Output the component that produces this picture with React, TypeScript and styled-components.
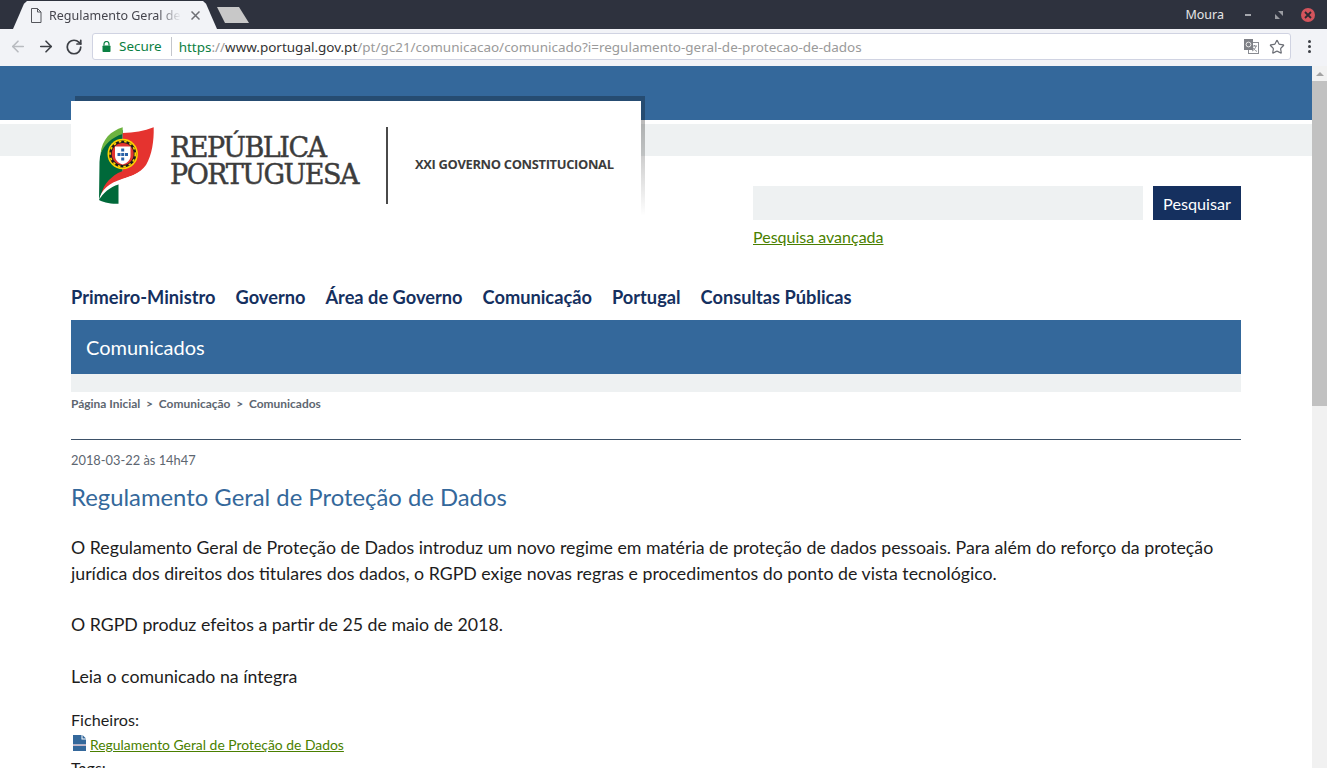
import React from 'react';
import styled, { createGlobalStyle } from 'styled-components';
import { ArrowLeft, ArrowRight, RotateCw, Star } from 'lucide-react';

const GlobalStyle = createGlobalStyle`
    html, body {
        margin: 0;
        padding: 0;
        height: 768px;
        overflow: hidden;
        background: #fff;
    }
    * {
        box-sizing: border-box;
    }
`;

const BLUE = '#34689b';
const PALE = '#eef1f2';
const NAVY = '#15305f';
const GREEN = '#4a7f00';

const Window = styled.div`
    width: 1327px;
    height: 768px;
    display: flex;
    flex-direction: column;
    overflow: hidden;
`;

const TitleBar = styled.div`
    height: 29px;
    flex: none;
    background: #2e323e;
    display: flex;
    align-items: flex-end;
    padding-left: 13px;
    font-family: 'Noto Sans', sans-serif;
`;

const Tab = styled.div`
    width: 204px;
    height: 28px;
    background: #f2f3f7;
    clip-path: polygon(0 100%, 11px 10%, 14px 0, 190px 0, 193px 10%, 100% 100%);
    display: flex;
    align-items: center;
    padding-left: 17px;
    flex: none;
`;

const TabTitle = styled.span`
    font-size: 12.5px;
    color: #45454d;
    margin-left: 7px;
    width: 132px;
    white-space: nowrap;
    overflow: hidden;
    -webkit-mask-image: linear-gradient(to right, #000 82%, transparent 100%);
    mask-image: linear-gradient(to right, #000 82%, transparent 100%);
`;

const TabClose = styled.svg`
    margin-left: 10px;
    flex: none;
`;

const NewTab = styled.div`
    width: 32px;
    height: 16px;
    margin: 0 0 6px 0;
    background: #c8c8c8;
    clip-path: polygon(0 0, 22px 0, 100% 100%, 8px 100%);
    flex: none;
`;

const WindowControls = styled.div`
    margin-left: auto;
    height: 29px;
    display: flex;
    align-items: center;
    color: #e6e6e6;
`;

const UserName = styled.span`
    font-size: 12.5px;
    margin-right: 21px;
`;

const MinimizeMark = styled.span`
    width: 6px;
    height: 2px;
    background: #a5a7ad;
    margin-right: 24px;
`;

const CloseButton = styled.span`
    width: 14px;
    height: 14px;
    border-radius: 50%;
    background: #d4545c;
    margin: 0 12px 0 18px;
    display: flex;
    align-items: center;
    justify-content: center;
`;

const Toolbar = styled.div`
    height: 37px;
    flex: none;
    background: #f2f3f7;
    display: flex;
    align-items: center;
    padding: 0 0 2px 9px;
    font-family: 'Noto Sans', sans-serif;
`;

const NavIcon = styled.span<{ $muted?: boolean }>`
    width: 18px;
    height: 18px;
    margin-right: 10px;
    display: flex;
    align-items: center;
    justify-content: center;
    flex: none;
    color: ${(p) => (p.$muted ? '#b9bbc0' : '#3c3f45')};
`;

const AddressBar = styled.div`
    width: 1199px;
    height: 27px;
    margin-left: -1px;
    background: #fff;
    border: 1px solid #d0d3e2;
    border-radius: 3px;
    display: flex;
    align-items: center;
    padding-left: 9px;
    font-size: 13.48px;
    white-space: nowrap;
    flex: none;
`;

const SecureLabel = styled.span`
    color: #0b8043;
    margin-left: 8px;
    padding-right: 9px;
    border-right: 1px solid #c4c6cc;
    line-height: 19px;
    margin-right: 7px;
`;

const UrlScheme = styled.span`
    color: #0b8043;
`;

const UrlHost = styled.span`
    color: #333;
`;

const UrlPath = styled.span`
    color: #9a9a9a;
`;

const AddressActions = styled.div`
    margin-left: auto;
    display: flex;
    align-items: center;
    gap: 10px;
    padding-right: 5px;
    color: #6b6e75;
`;

const MenuDots = styled.div`
    margin-left: 17px;
    display: flex;
    flex-direction: column;
    gap: 2px;
`;

const Dot = styled.span`
    width: 3px;
    height: 3px;
    border-radius: 50%;
    background: #3c3f45;
`;

const Viewport = styled.div`
    flex: 1;
    min-height: 0;
    display: flex;
`;

const Page = styled.div`
    flex: 1;
    min-width: 0;
    position: relative;
    overflow: hidden;
    font-family: Lato, sans-serif;
    color: #222;
`;

const Scrollbar = styled.div`
    width: 15px;
    flex: none;
    background: #f1f1f1;
    display: flex;
    flex-direction: column;
    align-items: center;
    padding-top: 6px;
`;

const ScrollArrow = styled.div`
    width: 0;
    height: 0;
    border-left: 4px solid transparent;
    border-right: 4px solid transparent;
    border-bottom: 4px solid #a3a3a3;
    margin-bottom: 5px;
`;

const ScrollThumb = styled.div`
    width: 15px;
    height: 325px;
    background: #c1c1c1;
`;

const TopBand = styled.div`
    height: 54px;
    background: ${BLUE};
`;

const PaleBand = styled.div`
    height: 32px;
    margin-top: 4px;
    background: ${PALE};
`;

const LogoShadow = styled.div`
    position: absolute;
    left: 75px;
    top: 30px;
    width: 570px;
    height: 120px;
    background: linear-gradient(
        to bottom,
        rgba(0, 0, 0, 0.27) 0,
        rgba(0, 0, 0, 0.27) 24px,
        rgba(0, 0, 0, 0.2) 58px,
        rgba(0, 0, 0, 0) 120px
    );
`;

const LogoCard = styled.div`
    position: absolute;
    left: 71px;
    top: 35px;
    width: 570px;
    height: 120px;
    background: #fff;
    display: flex;
    align-items: flex-start;
    padding: 26px 0 0 27px;
`;

const LogoWords = styled.div`
    margin: 7px 0 0 16px;
    font-family: 'DejaVu Serif', serif;
    font-size: 27px;
    line-height: 27px;
    color: #3c3c3c;
    letter-spacing: -1.5px;
    -webkit-text-stroke: 0.45px #3c3c3c;
    width: 216px;
    white-space: nowrap;
`;

const LogoRule = styled.div`
    width: 2px;
    height: 77px;
    background: #4a4a4a;
`;

const LogoGov = styled.div`
    margin: 29px 0 0 27px;
    font-family: 'Open Sans', sans-serif;
    font-weight: 700;
    font-size: 12.95px;
    line-height: 16px;
    letter-spacing: -0.35px;
    color: #3c3c3c;
    white-space: nowrap;
`;

const Container = styled.div`
    width: 1170px;
    margin: 0 auto;
`;

const SearchArea = styled.div`
    padding: 30px 0 0 682px;
`;

const SearchRow = styled.div`
    display: flex;
    gap: 10px;
`;

const SearchInput = styled.div`
    width: 390px;
    height: 34px;
    background: ${PALE};
`;

const SearchButton = styled.div`
    width: 88px;
    height: 34px;
    background: ${NAVY};
    color: #fff;
    font-size: 16.2px;
    display: flex;
    align-items: center;
    justify-content: center;
`;

const GreenLink = styled.a`
    color: ${GREEN};
    text-decoration: underline;
    font-size: 16px;
    line-height: 20px;
    display: block;
    margin-top: 7px;
`;

const MainNav = styled.nav`
    display: flex;
    gap: 20px;
    margin-top: 39px;
    height: 34px;
    font-size: 18.24px;
    font-weight: 700;
    line-height: 22px;
    color: ${NAVY};
`;

const SectionBar = styled.div`
    height: 54px;
    background: ${BLUE};
    color: #fff;
    font-size: 20px;
    padding-left: 15px;
    display: flex;
    align-items: center;
`;

const SectionFoot = styled.div`
    height: 18px;
    background: ${PALE};
`;

const Breadcrumbs = styled.div`
    display: flex;
    height: 48px;
    border-bottom: 1px solid #3d5168;
    padding-top: 5px;
    font-size: 11.95px;
    line-height: 14px;
    font-weight: 700;
    color: #5d6670;
    white-space: pre;
`;

const DateLine = styled.div`
    margin-top: 12px;
    font-size: 12.85px;
    line-height: 16px;
    color: #5d6670;
`;

const Heading = styled.h1`
    margin: 14px 0 0;
    font-size: 23.85px;
    line-height: 30px;
    font-weight: 400;
    color: ${BLUE};
`;

const Paragraph = styled.p`
    margin: 0 0 25.4px;
    font-size: 17.75px;
    line-height: 26px;
    color: #1d1d1d;
`;

const Body = styled.div`
    margin-top: 22px;
`;

const FilesLabel = styled.div`
    margin-top: -4.4px;
    font-size: 16.2px;
    line-height: 20px;
    color: #1d1d1d;
`;

const FileRow = styled.div`
    display: flex;
    align-items: flex-start;
    gap: 4px;
    margin-top: 4px;
    height: 22px;
    padding-left: 2px;
`;

const DocGlyph = styled.svg`
    margin-top: 1px;
    flex: none;
`;

const FileLink = styled.a`
    color: ${GREEN};
    text-decoration: underline;
    font-size: 13.9px;
    line-height: 20px;
    margin-top: 1px;
`;

const TagsLabel = styled.div`
    margin-top: 2px;
    font-size: 16px;
    line-height: 20px;
    color: #1d1d1d;
`;

const TabFileIcon = () => (
    <svg width="12" height="15" viewBox="0 0 12 15" fill="none" stroke="#55565c" strokeWidth="1">
        <path d="M1.5 0.5H7.5L11 4V14.5H1.5Z" />
        <path d="M7.5 0.5V4H11" />
    </svg>
);

const CloseCross = () => (
    <svg width="8" height="8" viewBox="0 0 8 8" stroke="#2a2a32" strokeWidth="1.8">
        <path d="M1 1L7 7M7 1L1 7" />
    </svg>
);

const RestoreMark = () => (
    <svg width="8" height="8" viewBox="0 0 8 8" fill="#9a9ca2">
        <path d="M3 0H8V5Z" />
        <path d="M0 3L5 8H0Z" />
    </svg>
);

const PadLock = () => (
    <svg width="9" height="11" viewBox="0 0 9 11">
        <path d="M2 4.5V3a2.5 2.5 0 0 1 5 0v1.5" fill="none" stroke="#0b8043" strokeWidth="1.2" />
        <rect x="0.5" y="4.5" width="8" height="6.5" rx="0.8" fill="#0b8043" />
    </svg>
);

const TranslateIcon = () => (
    <svg width="15" height="15" viewBox="0 0 15 15">
        <rect x="4.5" y="3.5" width="10" height="11" fill="#fff" stroke="#8a8c92" />
        <path d="M8 7H13M10.5 6V7M12 7C11.4 9.6 9.8 11.2 8 12M9 8.6C9.8 10.4 11.2 11.6 13 12.4" fill="none" stroke="#8a8c92" />
        <rect x="0" y="0" width="9" height="11" fill="#7e8086" />
        <circle cx="4.5" cy="5.5" r="2.4" fill="none" stroke="#e9e9e9" strokeWidth="1" />
    </svg>
);

const RepublicLogo = () => (
    <svg width="56" height="77" viewBox="0 0 56 77">
        <path d="M24.7 3C10 8 2 20 1.5 35L1 73C6 76 14 76.8 20.5 76.8V57L24.7 50Z" fill="#00693a" />
        <path d="M24.7 0.3C13 4 4 12 2.5 27C6 18 14 10 24.7 7Z" fill="#6cb33f" />
        <path d="M24.7 6C36 6 46 4 55.7 0.3C56 14 54 28 48 38C42 47 30 50 20 54C12 57 6 63 3 70C4 60 10 52 20 46L24.7 44Z" fill="#e5332f" />
        <path d="M1 73C3 63 11 56 24 52C30 50 38 48 44 43C38 50 28 53 20.5 57.5C12 60 5 66 1 73Z" fill="#fff" />
        <circle cx="24.7" cy="27" r="15.2" fill="#ffd400" />
        <circle cx="24.7" cy="27" r="13.6" fill="#1c1c1c" />
        <circle cx="24.7" cy="27" r="12.6" fill="none" stroke="#ffd400" strokeWidth="1.6" strokeDasharray="2.5 3" />
        <circle cx="24.7" cy="27" r="11" fill="#e2352f" />
        <path d="M17 19.5H32.5V29C32.5 34 28 36.5 24.7 37.5C21.5 36.5 17 34 17 29Z" fill="#fff" />
        <path d="M23.2 21.5H26.2V24.5H23.2ZM19.5 26H22.5V29H19.5ZM27 26H30V29H27ZM23.2 26H26.2V29H23.2ZM23.2 30.5H26.2V33.5H23.2Z" fill="#2a62a8" />
    </svg>
);

const DocIcon = () => (
    <DocGlyph width="13" height="16" viewBox="0 0 13 16">
        <path d="M0 0H8.5V4.5H13V9.5H0Z" fill="#34689b" />
        <path d="M9.5 0L13 3.5H9.5Z" fill="#34689b" />
        <rect x="0" y="9.5" width="13" height="1.5" fill="#c9b8c8" />
        <rect x="0" y="11" width="13" height="5" fill="#34689b" />
    </DocGlyph>
);

const NAV_ITEMS = ['Primeiro-Ministro', 'Governo', 'Área de Governo', 'Comunicação', 'Portugal', 'Consultas Públicas'];

export default function App() {
    return (
        <Window>
            <GlobalStyle />
            <TitleBar>
                <Tab>
                    <TabFileIcon />
                    <TabTitle>Regulamento Geral de</TabTitle>
                    <TabClose width="9" height="9" viewBox="0 0 9 9" stroke="#6e6f75" strokeWidth="1.5">
                        <path d="M0.5 0.5L8.5 8.5M8.5 0.5L0.5 8.5" />
                    </TabClose>
                </Tab>
                <NewTab />
                <WindowControls>
                    <UserName>Moura</UserName>
                    <MinimizeMark />
                    <RestoreMark />
                    <CloseButton>
                        <CloseCross />
                    </CloseButton>
                </WindowControls>
            </TitleBar>
            <Toolbar>
                <NavIcon $muted>
                    <ArrowLeft size={21} strokeWidth={2.2} />
                </NavIcon>
                <NavIcon>
                    <ArrowRight size={21} strokeWidth={2.2} />
                </NavIcon>
                <NavIcon>
                    <RotateCw size={18} strokeWidth={2.3} />
                </NavIcon>
                <AddressBar>
                    <PadLock />
                    <SecureLabel>Secure</SecureLabel>
                    <UrlScheme>https</UrlScheme>
                    <UrlPath>://</UrlPath>
                    <UrlHost>www.portugal.gov.pt</UrlHost>
                    <UrlPath>/pt/gc21/comunicacao/comunicado?i=regulamento-geral-de-protecao-de-dados</UrlPath>
                    <AddressActions>
                        <TranslateIcon />
                        <Star size={16} strokeWidth={1.8} />
                    </AddressActions>
                </AddressBar>
                <MenuDots>
                    <Dot />
                    <Dot />
                    <Dot />
                </MenuDots>
            </Toolbar>
            <Viewport>
                <Page>
                    <TopBand />
                    <PaleBand />
                    <LogoShadow />
                    <LogoCard>
                        <RepublicLogo />
                        <LogoWords>
                            REPÚBLICA
                            <br />
                            PORTUGUESA
                        </LogoWords>
                        <LogoRule />
                        <LogoGov>XXI GOVERNO CONSTITUCIONAL</LogoGov>
                    </LogoCard>
                    <Container>
                        <SearchArea>
                            <SearchRow>
                                <SearchInput />
                                <SearchButton>Pesquisar</SearchButton>
                            </SearchRow>
                            <GreenLink>Pesquisa avançada</GreenLink>
                        </SearchArea>
                        <MainNav>
                            {NAV_ITEMS.map((item) => (
                                <span key={item}>{item}</span>
                            ))}
                        </MainNav>
                        <SectionBar>Comunicados</SectionBar>
                        <SectionFoot />
                        <Breadcrumbs>Página Inicial  &gt;  Comunicação  &gt;  Comunicados</Breadcrumbs>
                        <DateLine>2018-03-22 às 14h47</DateLine>
                        <Heading>Regulamento Geral de Proteção de Dados</Heading>
                        <Body>
                            <Paragraph>
                                O Regulamento Geral de Proteção de Dados introduz um novo regime em matéria de proteção de dados pessoais. Para além do reforço da proteção jurídica dos direitos dos titulares dos dados, o RGPD exige novas regras e procedimentos do ponto de vista tecnológico.
                            </Paragraph>
                            <Paragraph>O RGPD produz efeitos a partir de 25 de maio de 2018.</Paragraph>
                            <Paragraph>Leia o comunicado na íntegra</Paragraph>
                        </Body>
                        <FilesLabel>Ficheiros:</FilesLabel>
                        <FileRow>
                            <DocIcon />
                            <FileLink>Regulamento Geral de Proteção de Dados</FileLink>
                        </FileRow>
                        <TagsLabel>Tags:</TagsLabel>
                    </Container>
                </Page>
                <Scrollbar>
                    <ScrollArrow />
                    <ScrollThumb />
                </Scrollbar>
            </Viewport>
        </Window>
    );
}
